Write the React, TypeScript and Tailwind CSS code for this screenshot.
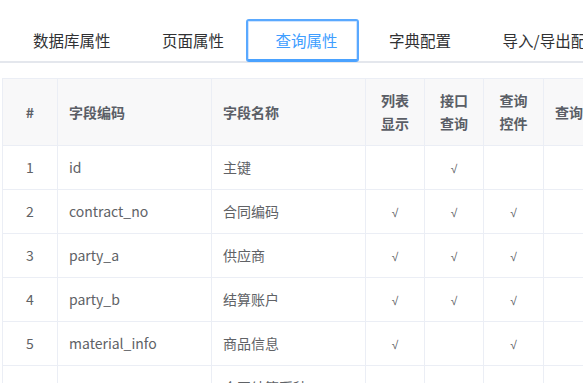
const TABS = ["数据库属性", "页面属性", "查询属性", "字典配置", "导入/导出配置"];

type Row = {
  no?: number;
  code: string;
  name: string;
  list: boolean;
  api: boolean;
  ctrl: boolean;
};

const ROWS: Row[] = [
  { no: 1, code: "id", name: "主键", list: false, api: true, ctrl: false },
  { no: 2, code: "contract_no", name: "合同编码", list: true, api: true, ctrl: true },
  { no: 3, code: "party_a", name: "供应商", list: true, api: true, ctrl: true },
  { no: 4, code: "party_b", name: "结算账户", list: true, api: true, ctrl: true },
  { no: 5, code: "material_info", name: "商品信息", list: true, api: false, ctrl: true },
  // last row is only partly in view
  { code: "", name: "合同结算币种", list: false, api: false, ctrl: false },
];

const cell = "border border-[#ebeef5] p-0";

function Check({ on }: { on: boolean }) {
  return (
    <span
      className="text-[12px] text-[#606266]"
      style={{ fontFamily: '"Liberation Sans", sans-serif' }}
    >
      {on ? "√" : ""}
    </span>
  );
}

export default function App() {
  return (
    <div
      className="w-[583px] h-[383px] overflow-hidden bg-white text-[#606266]"
      style={{ fontFamily: '"Noto Sans CJK SC", "Noto Sans", sans-serif' }}
    >
      {/* Tabs */}
      <div className="pt-[19px]">
        <div className="flex h-[44px] border-b-2 border-[#e4e7ed] pl-[3px]">
          {TABS.map((t, i) => {
            const active = i === 2;
            return (
              <div
                key={t}
                className={`relative flex h-[43px] shrink-0 items-center whitespace-nowrap pl-[30px] pr-[21.5px] text-[15.5px] ${
                  active
                    ? "rounded-[3px] border-2 border-[#5aa9ff] text-[#409eff] shadow-[inset_0_0_0_1px_#cfe4ff]"
                    : "border-2 border-transparent text-[#303133]"
                }`}
              >
                <span className="-ml-[2px] -mr-[2px]">{t}</span>
                {active && (
                  <span className="absolute -bottom-[2px] left-0 right-0 h-[3px] rounded-b-[2px] bg-[#4aa2ff]" />
                )}
              </div>
            );
          })}
        </div>
      </div>

      {/* Field table */}
      <div className="mt-[15px] ml-[2px]">
        <table className="w-[651px] table-fixed border-collapse text-[14px]">
          <colgroup>
            <col className="w-[55px]" />
            <col className="w-[154px]" />
            <col className="w-[154px]" />
            <col className="w-[59px]" />
            <col className="w-[59px]" />
            <col className="w-[60px]" />
            <col className="w-[110px]" />
          </colgroup>
          <thead>
            <tr className="h-[67px] bg-[#f8f8f9] font-semibold text-[#5a5e66] leading-[23px]">
              <th className={`${cell} text-center`}>#</th>
              <th className={`${cell} px-[11px] text-left`}>字段编码</th>
              <th className={`${cell} px-[11px] text-left`}>字段名称</th>
              <th className={`${cell} px-[12px] text-center`}>列表显示</th>
              <th className={`${cell} px-[12px] text-center`}>接口查询</th>
              <th className={`${cell} px-[12px] text-center`}>查询控件</th>
              <th className={`${cell} px-[11px] text-left whitespace-nowrap`}>查询模式</th>
            </tr>
          </thead>
          <tbody>
            {ROWS.map((r, i) => (
              <tr key={i} className="h-[44px]">
                <td className={`${cell} text-center`}>{r.no}</td>
                <td className={`${cell} px-[11px]`}>{r.code}</td>
                <td className={`${cell} px-[11px]`}>{r.name}</td>
                <td className={`${cell} text-center`}>
                  <Check on={r.list} />
                </td>
                <td className={`${cell} text-center`}>
                  <Check on={r.api} />
                </td>
                <td className={`${cell} text-center`}>
                  <Check on={r.ctrl} />
                </td>
                <td className={cell} />
              </tr>
            ))}
          </tbody>
        </table>
      </div>
    </div>
  );
}
